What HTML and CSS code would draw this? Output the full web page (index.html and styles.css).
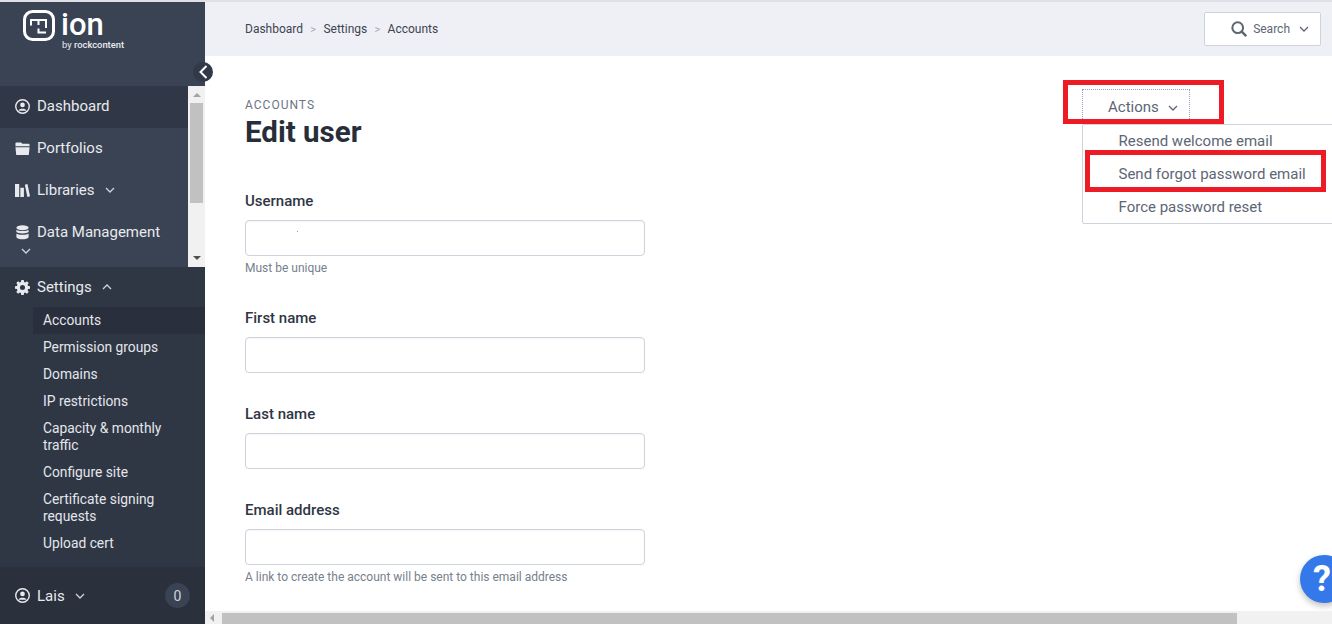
FILE: index.html
```html
<!DOCTYPE html>
<html lang="en">
<head>
<meta charset="utf-8">
<title>Edit user</title>
<link rel="stylesheet" href="styles.css">
</head>
<body>
<div class="app">
  <aside class="sidebar">
    <div class="brand">
      <svg class="logo-mark" viewBox="0 0 32 31" width="32" height="31" fill="none" stroke="#fff">
        <rect x="1.500" y="1.500" width="29" height="28" rx="8" stroke-width="3"/>
        <path d="M8 15.500V10H23V18M15.500 10V15M15.500 18.500V22.500H23" stroke-width="2"/>
      </svg>
      <div class="brand-text">
        <div class="brand-name">ion</div>
        <div class="brand-by">by <b>rockcontent</b></div>
      </div>
    </div>
    <button class="collapse" type="button" aria-label="Collapse">
      <svg viewBox="0 0 10 14" width="10" height="14" fill="none" stroke="#fff" stroke-width="2"><path d="M8.500 1 2.500 7l6 6"/></svg>
    </button>
    <div class="nav-scroll">
      <nav class="nav">
        <a class="nav-item active">
          <svg class="ico" viewBox="0 0 16 16" fill="none" stroke="#e8eaee" stroke-width="1.500"><circle cx="8" cy="8" r="7.200"/><circle cx="8" cy="6.300" r="2.500" fill="#e8eaee" stroke="none"/><path d="M3.700 12.600c1-2.800 7.600-2.800 8.600 0z" fill="#e8eaee" stroke="none"/></svg>
          Dashboard
        </a>
        <a class="nav-item">
          <svg class="ico" viewBox="0 0 16 16" fill="#e8eaee"><path d="M1.500 1.500h5l1.500 1.500h6.500a1 1 0 0 1 1 1v1.500H.5V2.500a1 1 0 0 1 1-1z"/><path d="M.5 6.700h15l-.7 7.300a1 1 0 0 1-1 1H2.200a1 1 0 0 1-1-1z"/></svg>
          Portfolios
        </a>
        <a class="nav-item">
          <svg class="ico" viewBox="0 0 16 16" fill="#e8eaee"><path d="M0 1h4.500v14H0zM5.700 5h3.800v10H5.700zM10.500 1.800l2.800-.8L16 14.200l-2.800.8z"/></svg>
          Libraries
          <svg class="chev" viewBox="0 0 10 6"><path d="M1 1l4 4 4-4"/></svg>
        </a>
        <a class="nav-item wrap">
          <svg class="ico" viewBox="0 0 16 16" fill="#e8eaee"><ellipse cx="8" cy="3" rx="6.500" ry="2.700"/><path d="M1.500 5c1.500 2 11.500 2 13 0v2.500c-1.500 2-11.500 2-13 0zM1.500 9c1.500 2 11.500 2 13 0v4c-1.500 3-11.500 3-13 0z"/></svg>
          Data Management
          <span class="line-break"></span>
          <svg class="chev chev-below" viewBox="0 0 10 6"><path d="M1 1l4 4 4-4"/></svg>
        </a>
      </nav>
      <div class="vscroll">
        <span class="arrow up"></span>
        <span class="vthumb"></span>
        <span class="arrow down"></span>
      </div>
    </div>
    <section class="settings">
      <a class="nav-item settings-head">
        <svg class="ico" viewBox="0 0 16 16" fill="#e8eaee"><path fill-rule="evenodd" d="M6.700 0h2.600l.4 2.100 1.200.5L12.700 1.400l1.900 1.900-1.200 1.800.5 1.200 2.100.4v2.600l-2.100.4-.5 1.200 1.200 1.800-1.900 1.900-1.800-1.200-1.200.5-.4 2.100H6.700l-.4-2.100-1.200-.5-1.800 1.200-1.900-1.900 1.200-1.800-.5-1.200L0 9.300V6.700l2.100-.4.500-1.200-1.200-1.800 1.900-1.900 1.800 1.200 1.200-.5zM8 5.300a2.700 2.700 0 1 0 0 5.400 2.700 2.700 0 0 0 0-5.400z"/></svg>
        Settings
        <svg class="chev" viewBox="0 0 10 6"><path d="M1 5l4-4 4 4"/></svg>
      </a>
      <ul class="subnav">
        <li class="current">Accounts</li>
        <li>Permission groups</li>
        <li>Domains</li>
        <li>IP restrictions</li>
        <li>Capacity &amp; monthly traffic</li>
        <li>Configure site</li>
        <li>Certificate signing requests</li>
        <li>Upload cert</li>
      </ul>
    </section>
    <footer class="side-foot">
      <svg class="ico" viewBox="0 0 16 16" fill="none" stroke="#e8eaee" stroke-width="1.500"><circle cx="8" cy="8" r="7.200"/><circle cx="8" cy="6.300" r="2.500" fill="#e8eaee" stroke="none"/><path d="M3.700 12.600c1-2.800 7.600-2.800 8.600 0z" fill="#e8eaee" stroke="none"/></svg>
      Lais
      <svg class="chev" viewBox="0 0 10 6"><path d="M1 1l4 4 4-4"/></svg>
      <span class="count">0</span>
    </footer>
  </aside>

  <div class="main">
    <header class="topbar">
      <div class="crumbs"><span>Dashboard</span><i>&gt;</i><span>Settings</span><i>&gt;</i><span>Accounts</span></div>
      <button class="search" type="button">
        <svg viewBox="0 0 18 18" width="18" height="18" fill="none" stroke="#5d6675" stroke-width="2.300"><circle cx="7.500" cy="7.500" r="6"/><path d="M12 12l5 5" stroke-width="2.800"/></svg>
        <span>Search</span>
        <svg class="chev dark" viewBox="0 0 10 6"><path d="M1 1l4 4 4-4"/></svg>
      </button>
    </header>
    <main class="content">
      <div class="head-row">
        <div>
          <div class="eyebrow">ACCOUNTS</div>
          <h1>Edit user</h1>
        </div>
        <div class="actions">
          <button class="actions-btn" type="button">Actions <svg class="chev dark" viewBox="0 0 10 6"><path d="M1 1l4 4 4-4"/></svg></button>
          <ul class="menu">
            <li>Resend welcome email</li>
            <li>Send forgot password email</li>
            <li>Force password reset</li>
          </ul>
          <span class="mark mark-actions"></span>
          <span class="mark mark-forgot"></span>
        </div>
      </div>
      <form class="form">
        <div class="field">
          <label>Username</label>
          <div class="input"><span class="speck"></span></div>
          <small>Must be unique</small>
        </div>
        <div class="field">
          <label>First name</label>
          <div class="input"></div>
        </div>
        <div class="field">
          <label>Last name</label>
          <div class="input"></div>
        </div>
        <div class="field">
          <label>Email address</label>
          <div class="input"></div>
          <small>A link to create the account will be sent to this email address</small>
        </div>
      </form>
      <button class="help" type="button">?</button>
    </main>
    <div class="hscroll">
      <span class="arrow left"></span>
      <span class="hthumb"></span>
    </div>
  </div>
</div>
</body>
</html>
```
FILE: styles.css
```css
* { box-sizing: border-box; }
html, body { margin: 0; height: 100%; overflow: hidden; }
body { font-family: Roboto, "Liberation Sans", sans-serif; background: #fff; color: #272e3a; border-top: 2px solid #dfe0e6; }
.app { display: flex; height: 622px; }

.sidebar { width: 205px; flex: none; background: #3a4354; color: #e8eaee; display: flex; flex-direction: column; position: relative; }
.brand { height: 84px; flex: none; padding: 8px 0 0 23px; display: flex; gap: 7px; align-items: flex-start; }
.brand-name { font-size: 31px; line-height: 29px; font-weight: 500; color: #fff; margin-left: -1px; }
.brand-by { font-size: 9.400px; line-height: 11px; color: #e8eaee; }
.brand-by b { font-weight: 500; }
.collapse { position: absolute; top: 60px; left: 193px; width: 20px; height: 20px; border-radius: 50%; border: 0; padding: 0; background: #323a49; display: flex; align-items: center; justify-content: center; }

.nav-scroll { height: 181px; flex: none; display: flex; overflow: hidden; }
.nav { width: 188px; flex: none; }
.nav-item { display: flex; align-items: center; height: 42px; padding: 0 0 2px 15px; font-size: 15px; color: #e8eaee; }
.nav-item.active { background: #303847; }
.nav-item.wrap { flex-wrap: wrap; align-content: flex-start; padding-top: 11px; height: 55px; }
.line-break { flex-basis: 100%; height: 0; }
.ico { width: 15px; height: 15px; flex: none; margin-right: 7px; }
.chev { width: 10px; height: 6px; margin-left: 10px; flex: none; fill: none; stroke: #cfd3da; stroke-width: 1.300; }
.chev-below { margin: 7px 0 0 6px; }
.chev.dark { stroke: #5d6675; }

.vscroll { width: 17px; flex: none; background: #f1f1f1; display: flex; flex-direction: column; align-items: center; padding-top: 7px; }
.vthumb { width: 13px; height: 100px; background: #c1c1c1; margin-top: 6px; }
.vscroll .down { margin-top: 53px; }
.arrow { width: 0; height: 0; border-style: solid; border-color: transparent; display: block; }
.arrow.up { border-width: 0 4px 4px; border-bottom-color: #a3a3a3; }
.arrow.down { border-width: 4px 4px 0; border-top-color: #505050; }
.arrow.left { border-width: 4px 4px 4px 0; border-right-color: #a3a3a3; }

.settings { flex: 1; background: #2f3745; display: flex; flex-direction: column; }
.settings-head { height: 40px; flex: none; padding-bottom: 0; }
.subnav { list-style: none; margin: 0 0 0 33px; padding: 0; font-size: 13.800px; line-height: 17px; color: #e4e6eb; }
.subnav li { padding: 5px 30px 5px 10px; }
.subnav .current { background: #292f3c; }

.side-foot { height: 57px; flex: none; background: #2a303c; display: flex; align-items: center; padding: 0 15px; font-size: 15px; color: #e8eaee; }
.count { margin-left: auto; width: 25px; height: 25px; border-radius: 50%; background: #3a4354; color: #cfd3da; font-size: 14px; display: flex; align-items: center; justify-content: center; }

.main { flex: 1; min-width: 0; display: flex; flex-direction: column; position: relative; }
.topbar { height: 54px; flex: none; background: #eff0f5; display: flex; align-items: center; justify-content: space-between; padding: 0 11px 0 40px; }
.crumbs { display: flex; align-items: center; gap: 7.300px; font-size: 12px; color: #3c4452; }
.crumbs i { font-style: normal; color: #a3a9b5; font-size: 11px; }
.search { width: 117px; height: 34px; background: #fff; border: 1px solid #ced2dc; border-radius: 2px; display: flex; align-items: center; padding: 0 11px 0 26px; font: 12px Roboto, sans-serif; color: #5d6675; }
.search span { margin-left: 6px; }
.search .chev { margin-left: 9px; }

.content { flex: 1; min-height: 0; padding: 42px 0 0 40px; position: relative; overflow: hidden; }
.head-row { display: flex; justify-content: space-between; height: 52px; }
.eyebrow { font-size: 12px; line-height: 14px; letter-spacing: 1px; color: #6d7584; margin-bottom: 3px; }
h1 { margin: 0; font-size: 29.500px; line-height: 35px; font-weight: 700; color: #272e3a; }

.actions { position: relative; width: 250px; margin-top: -9px; }
.actions-btn { display: block; width: 108px; height: 34px; border: 1px dotted #8fa3c8; border-bottom: 0; background: #fff; font: 15px Roboto, sans-serif; color: #5d6675; padding: 0 0 0 25px; text-align: left; }
.actions-btn .chev { margin-left: 5px; vertical-align: middle; }
.menu { position: absolute; top: 35px; left: 0; width: 260px; height: 100px; margin: 0; padding: 0; list-style: none; background: #fff; border: 1px solid #ced2dc; border-radius: 2px 0 0 2px; font-size: 15px; color: #5d6675; }
.menu li { height: 33px; line-height: 32px; padding-left: 35.500px; }
.mark { position: absolute; border: 5px solid #ed1c24; }
.mark-actions { left: -19px; top: -9px; width: 161px; height: 44px; }
.mark-forgot { left: 3px; top: 61px; width: 241px; height: 42px; }

.form { width: 400px; margin-top: 42px; }
.field { margin-bottom: 32px; }
.field label { display: block; font-size: 15px; line-height: 18px; font-weight: 500; color: #2f3644; margin-bottom: 10px; }
.input { height: 36px; border: 1px solid #ced2dc; border-radius: 4px; background: #fff; box-shadow: inset 0 1px 2px rgba(0,0,0,.04); }
.speck { display: block; width: 1px; height: 1px; margin: 10px 0 0 51px; background: #9aa0aa; }
.field small { display: block; font-size: 12px; line-height: 14px; color: #77808e; margin-top: 5px; padding-bottom: 2px; }

.help { position: absolute; left: 1095px; top: 499px; width: 48px; height: 48px; border-radius: 50%; border: 0; background: #3478ea; color: #fff; font: 700 36px Roboto, sans-serif; padding: 0 4px 0 0; box-shadow: 0 3px 6px rgba(0,0,0,.25); }

.hscroll { height: 13px; flex: none; background: #f1f1f1; display: flex; align-items: flex-end; padding-left: 5px; }
.hscroll .arrow { margin-bottom: 2px; }
.hthumb { width: 1015px; height: 11px; background: #c1c1c1; margin-left: 8px; }
```
